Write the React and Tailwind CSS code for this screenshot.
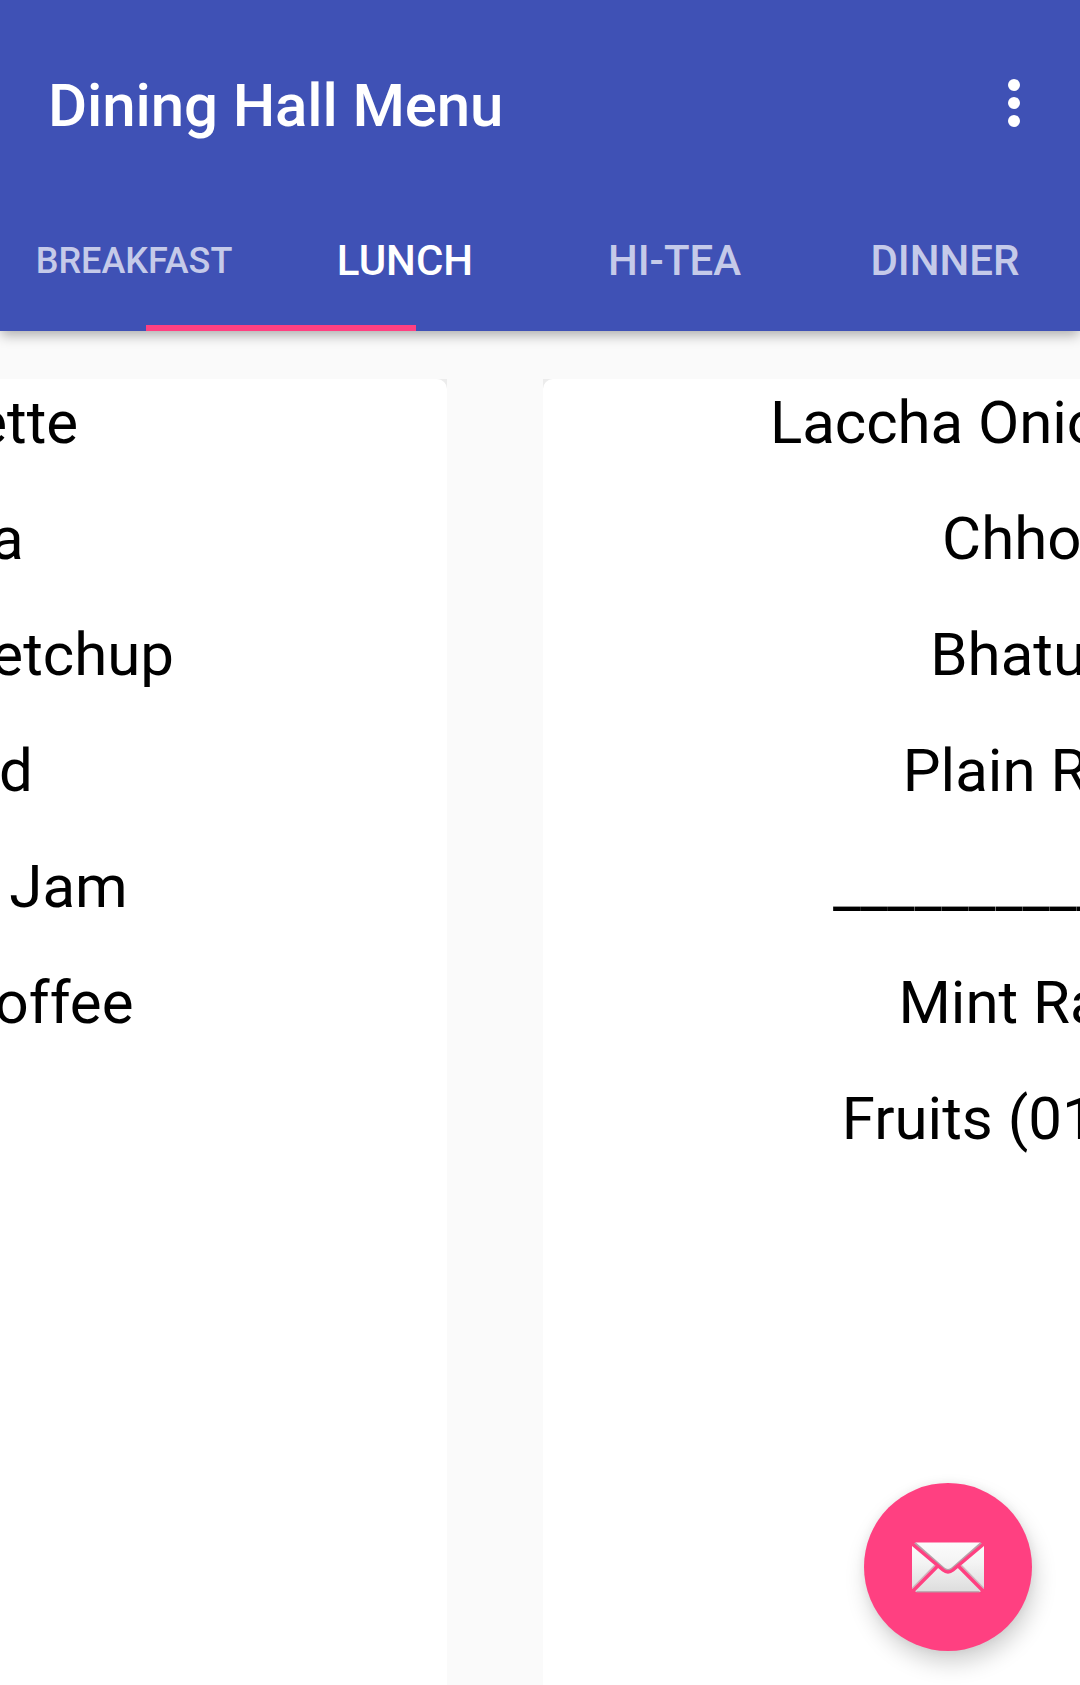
const TABS = [
  { label: "Breakfast", className: "-ml-0.5 text-[36px] leading-[42px] text-[#c5cae9]" },
  { label: "Lunch", className: "text-[42px] leading-[49px] text-white" },
  { label: "Hi-Tea", className: "-ml-px text-[42px] leading-[49px] text-[#c5cae9]" },
  { label: "Dinner", className: "text-[42px] leading-[49px] text-[#c5cae9]" },
];

const BREAKFAST = [
  { name: "Omelette", className: "pl-[3px]" },
  { name: "Poha", className: "" },
  { name: "Tomato Ketchup", className: "pr-[2px]" },
  { name: "Bread", className: "" },
  { name: "Butter & Jam", className: "pr-[2px]" },
  { name: "Milk & Coffee", className: "" },
];

const LUNCH = [
  { name: "Laccha Onion Salad", className: "pr-[2px] tracking-[-0.05px]" },
  { name: "Chhole", className: "" },
  { name: "Bhatura", className: "pr-[2px]" },
  { name: "Plain Rice", className: "pr-[2px]" },
  { name: "_______________", className: "pl-[2px]" },
  { name: "Mint Raita", className: "pr-[2px]" },
  { name: "Fruits (01 No.)", className: "pr-[4px]" },
];

function MenuCard({ items }) {
  return (
    <div className="w-[984px] shrink-0 bg-[#ececec]">
      <ul className="flex h-full flex-col items-center gap-[46px] rounded-t-[10px] bg-white pt-[9px]">
        {items.map((item) => (
          <li
            key={item.name}
            className={`text-[60px] leading-[70px] whitespace-nowrap text-black ${item.className}`}
          >
            {item.name}
          </li>
        ))}
      </ul>
    </div>
  );
}

function Envelope() {
  return (
    <svg width="72" height="51" viewBox="0 0 72 51" fill="none">
      <defs>
        <linearGradient id="paper" x1="0" y1="0" x2="0" y2="51" gradientUnits="userSpaceOnUse">
          <stop offset="0" stopColor="#fcfcfc" />
          <stop offset="0.4" stopColor="#f4f4f4" />
          <stop offset="1" stopColor="#dcdcdc" />
        </linearGradient>
      </defs>
      <path d="M4 .5H68L72 4V46L68 50H4L0 46V4Z" fill="url(#paper)" />
      <path d="M4.5 49.8H67.5" stroke="#b59aa3" strokeWidth="1.2" />
      <path d="M2.5 1.5L31 26.5Q36 31 41 26.5L69.5 1.5" stroke="#b8a2aa" strokeWidth="3.4" />
      <path d="M1 47L23.5 24M71 47L48.5 24" stroke="#d0b4be" strokeWidth="3.4" />
      <path d="M-1 1L31 28Q36 32 41 28L73 1" stroke="#ff4081" strokeWidth="3.4" />
      <path d="M0 50L26 23.8M72 50L46 23.8" stroke="#ff4081" strokeWidth="3.4" />
    </svg>
  );
}

export default function App() {
  return (
    <div className="relative flex h-[1685px] w-[1080px] flex-col overflow-hidden bg-[#fafafa] font-[Roboto,sans-serif]">
      <header className="z-10 flex h-[331px] shrink-0 flex-col bg-[#3f51b5] shadow-[0_5px_12px_-1px_rgba(0,0,0,0.32)]">
        <div className="flex h-[187px] items-center justify-between pt-[24px] pr-[60px] pl-[48px]">
          <h1 className="text-[60px] leading-[70px] font-medium tracking-[-0.12px] text-white">
            Dining Hall Menu
          </h1>
          <button aria-label="More options" className="flex flex-col gap-1.5 pb-[5px]">
            <span className="size-3 rounded-full bg-white" />
            <span className="size-3 rounded-full bg-white" />
            <span className="size-3 rounded-full bg-white" />
          </button>
        </div>
        <nav className="grid h-[138px] grid-cols-4 items-center pt-[9px]">
          {TABS.map((tab) => (
            <div key={tab.label} className={`text-center font-medium uppercase ${tab.className}`}>
              {tab.label}
            </div>
          ))}
        </nav>
        <div className="ml-[146px] h-1.5 w-[270px] bg-[#ff4081]" />
      </header>

      <main className="-ml-[537px] flex w-[2064px] flex-1 gap-24 pt-12">
        <MenuCard items={BREAKFAST} />
        <MenuCard items={LUNCH} />
      </main>

      <button
        aria-label="Send mail"
        className="absolute right-12 bottom-[34px] flex size-[168px] items-center justify-center rounded-full bg-[#ff4081] shadow-[3px_12px_22px_rgba(0,0,0,0.18),0_0_10px_rgba(0,0,0,0.06)]"
      >
        <Envelope />
      </button>
    </div>
  );
}
